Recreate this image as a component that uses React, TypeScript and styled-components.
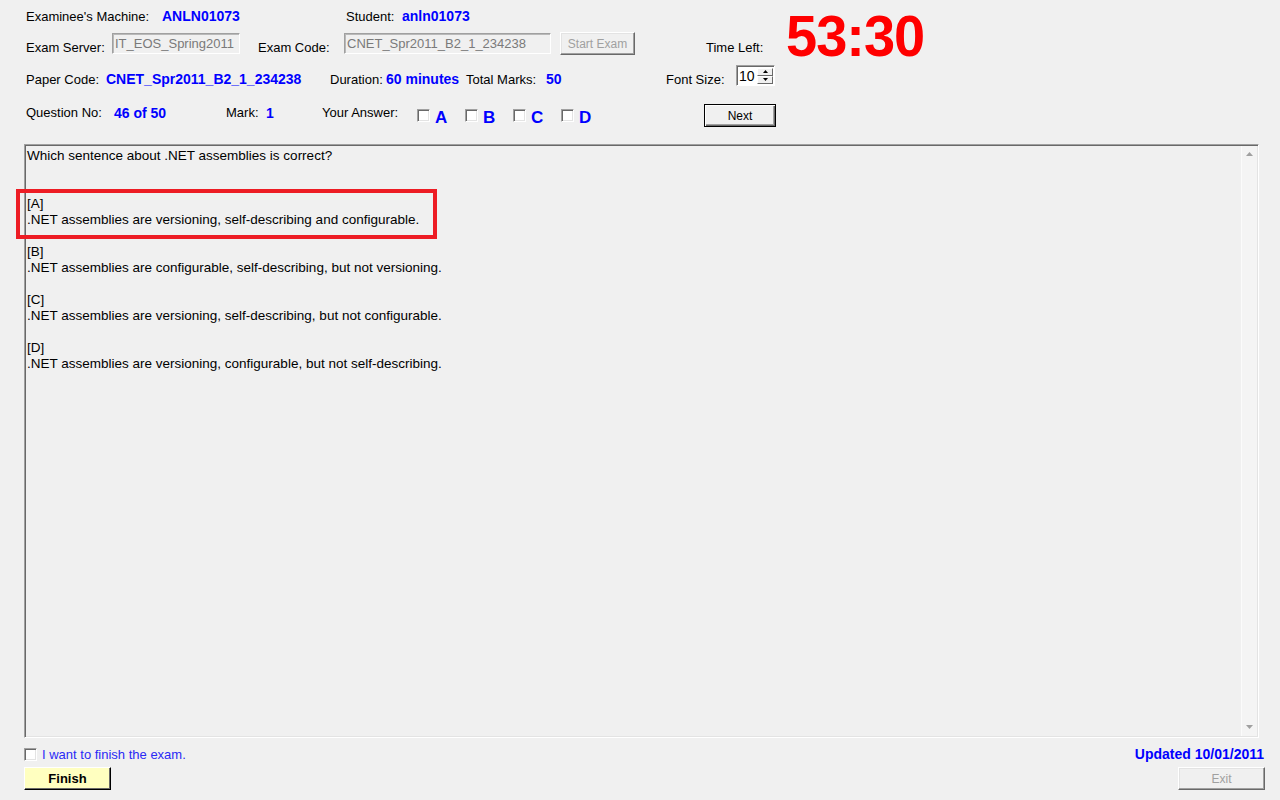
import React from "react";
import styled, { createGlobalStyle, css } from "styled-components";

const GlobalStyle = createGlobalStyle`
  html, body { margin: 0; padding: 0; background: #f0f0f0; }
  body { font-family: "Liberation Sans", Arial, sans-serif; color: #000; }
  *, *::before, *::after { box-sizing: border-box; }
`;

const Window = styled.div`
  width: 1280px;
  height: 800px;
  display: flex;
  flex-direction: column;
  background: #f0f0f0;
  overflow: hidden;
`;

const Header = styled.div`
  display: flex;
  padding-left: 26px;
`;

const LeftBlock = styled.div`
  width: 750px;
  padding-top: 6px;
  display: flex;
  flex-direction: column;
`;

const Row = styled.div<{ $h: number; $mt: number; $align?: string }>`
  display: flex;
  height: ${(p) => p.$h}px;
  margin-top: ${(p) => p.$mt}px;
  align-items: ${(p) => p.$align ?? "center"};
`;

const Cell = styled.div<{ $w?: number; $lift?: number }>`
  flex: 0 0 auto;
  width: ${(p) => (p.$w ? `${p.$w}px` : "auto")};
  display: flex;
  align-items: center;
  margin-bottom: ${(p) => p.$lift ?? 0}px;
`;

const Label = styled.span`
  font-size: 13px;
  line-height: 15px;
  white-space: nowrap;
  color: #000;
`;

const Value = styled.span`
  font-size: 14px;
  line-height: 16px;
  font-weight: bold;
  color: #0000ff;
  white-space: nowrap;
`;

const Timer = styled.div`
  margin-left: 10px;
  margin-top: 9px;
  font-size: 56px;
  line-height: 56px;
  font-weight: bold;
  color: #ff0000;
  transform: scaleY(1.01);
  transform-origin: top left;
  letter-spacing: -1px;
`;

const TextBox = styled.div<{ $w: number }>`
  width: ${(p) => p.$w}px;
  height: 21px;
  border: 1px solid;
  border-color: #a0a0a0 #ffffff #ffffff #a0a0a0;
  box-shadow: inset 1px 1px 0 #b9b9b9;
  background: #f0f0f0;
  color: #7a7a7a;
  font-size: 13px;
  line-height: 17px;
  padding: 1px 0 0 2px;
  white-space: nowrap;
  overflow: hidden;
`;

const raised = css`
  border: 1px solid;
  border-color: #ffffff #696969 #696969 #ffffff;
  box-shadow: inset -1px -1px 0 #a0a0a0, inset 1px 1px 0 #e3e3e3;
`;

const Button = styled.div<{ $w: number; $variant?: "normal" | "default" | "finish"; $disabled?: boolean }>`
  width: ${(p) => p.$w}px;
  height: 23px;
  display: flex;
  align-items: center;
  justify-content: center;
  font-size: 12px;
  color: ${(p) => (p.$disabled ? "#a0a0a0" : "#000")};
  background: #f0f0f0;
  ${raised}
  ${(p) =>
    p.$variant === "default" &&
    css`
      border: 1px solid #000;
      box-shadow: inset 1px 1px 0 #fff, inset -1px -1px 0 #696969, inset -2px -2px 0 #a0a0a0;
    `}
  ${(p) =>
    p.$variant === "finish" &&
    css`
      background: #ffffc0;
      font-weight: bold;
      font-size: 13px;
      border: 1px solid;
      border-color: #ffffff #000 #000 #ffffff;
      box-shadow: inset -1px -1px 0 #696969;
    `}
`;

const Spinner = styled.div`
  width: 39px;
  height: 21px;
  display: flex;
  border: 1px solid;
  border-color: #a0a0a0 #ffffff #ffffff #a0a0a0;
  box-shadow: inset 1px 1px 0 #696969;
  background: #fff;
  padding: 2px 1px 1px 2px;
`;

const SpinValue = styled.span`
  flex: 1;
  font-size: 14px;
  line-height: 16px;
`;

const SpinButtons = styled.div`
  width: 16px;
  display: flex;
  flex-direction: column;
`;

const SpinBtn = styled.div`
  flex: 1;
  display: flex;
  align-items: center;
  justify-content: center;
  background: #f0f0f0;
  border: 1px solid;
  border-color: #fff #696969 #696969 #fff;
`;

const CheckBox = styled.span`
  display: inline-block;
  width: 13px;
  height: 13px;
  background: #fff;
  border: 1px solid;
  border-color: #a0a0a0 #ffffff #ffffff #a0a0a0;
  box-shadow: inset 1px 1px 0 #696969, inset -1px -1px 0 #e3e3e3;
  flex: 0 0 auto;
`;

const Options = styled.div`
  display: flex;
  width: 287px;
  align-items: center;
`;

const Option = styled.div`
  width: 48px;
  display: flex;
  align-items: center;
  gap: 5px;
`;

const OptionLetter = styled.span`
  font-size: 17px;
  line-height: 18px;
  font-weight: bold;
  color: #0000ff;
  margin-top: 4px;
`;

const Panel = styled.div`
  margin: 17px 0 0 24px;
  width: 1235px;
  height: 594px;
  display: flex;
  border: 1px solid;
  border-color: #a0a0a0 #ffffff #ffffff #a0a0a0;
  box-shadow: inset 1px 1px 0 #696969, inset -1px -1px 0 #e3e3e3;
`;

const Content = styled.div`
  flex: 1;
  padding: 3px 0 0 2px;
  font-size: 13.5px;
  line-height: 16px;
  color: #000;
`;

const Line = styled.div`
  height: 16px;
  white-space: nowrap;
`;

const Block = styled.div<{ $mt: number; $highlight?: boolean }>`
  position: relative;
  margin-top: ${(p) => p.$mt}px;
  ${(p) =>
    p.$highlight &&
    css`
      &::after {
        content: "";
        position: absolute;
        left: -11px;
        top: -7px;
        width: 421px;
        height: 50px;
        border: 4px solid #ed1c24;
      }
    `}
`;

const ScrollBar = styled.div`
  width: 16px;
  margin: 1px 1px 1px 0;
  display: flex;
  flex-direction: column;
  justify-content: space-between;
  background: #f4f4f4;
  border-left: 1px solid #fbfbfb;
`;

const ScrollArrow = styled.div`
  height: 17px;
  display: flex;
  align-items: center;
  justify-content: center;
`;

const Footer = styled.div`
  display: flex;
  flex-direction: column;
  padding: 8px 15px 0 24px;
`;

const FooterRow = styled.div<{ $mt: number }>`
  display: flex;
  justify-content: space-between;
  align-items: center;
  margin-top: ${(p) => p.$mt}px;
`;

const FinishCheck = styled.div`
  display: flex;
  align-items: center;
  gap: 5px;
`;

const FinishText = styled.span`
  font-size: 13px;
  line-height: 15px;
  color: #2a2af5;
`;

const Updated = styled(Value)`
  margin-right: 1px;
`;

const Tri = ({ up, size = 7, color = "#a0a0a0" }: { up?: boolean; size?: number; color?: string }) => (
  <svg width={size} height={Math.ceil(size / 2) + 1} viewBox={`0 0 ${size} ${Math.ceil(size / 2) + 1}`}>
    {up ? (
      <polygon points={`0,${Math.ceil(size / 2)} ${size / 2},0 ${size},${Math.ceil(size / 2)}`} fill={color} />
    ) : (
      <polygon points={`0,0 ${size},0 ${size / 2},${Math.ceil(size / 2)}`} fill={color} />
    )}
  </svg>
);

export default function App() {
  return (
    <Window>
      <GlobalStyle />
      <Header>
        <LeftBlock>
          <Row $h={20} $mt={0}>
            <Cell $w={136}><Label>Examinee's Machine:</Label></Cell>
            <Cell $w={184}><Value>ANLN01073</Value></Cell>
            <Cell $w={56}><Label>Student:</Label></Cell>
            <Cell><Value>anln01073</Value></Cell>
          </Row>
          <Row $h={24} $mt={6} $align="flex-end">
            <Cell $w={86} $lift={1}><Label>Exam Server:</Label></Cell>
            <Cell $w={146} $lift={2}><TextBox $w={128}>IT_EOS_Spring2011</TextBox></Cell>
            <Cell $w={86} $lift={1}><Label>Exam Code:</Label></Cell>
            <Cell $w={216} $lift={2}><TextBox $w={207}>CNET_Spr2011_B2_1_234238</TextBox></Cell>
            <Cell $w={146} $lift={1}><Button $w={75} $disabled>Start Exam</Button></Cell>
            <Cell $lift={1}><Label>Time Left:</Label></Cell>
          </Row>
          <Row $h={23} $mt={8} $align="flex-end">
            <Cell $w={80}><Label>Paper Code:</Label></Cell>
            <Cell $w={224}><Value>CNET_Spr2011_B2_1_234238</Value></Cell>
            <Cell $w={56}><Label>Duration:</Label></Cell>
            <Cell $w={80}><Value>60 minutes</Value></Cell>
            <Cell $w={80}><Label>Total Marks:</Label></Cell>
            <Cell $w={120}><Value>50</Value></Cell>
            <Cell $w={70}><Label>Font Size:</Label></Cell>
            <Cell $lift={1}>
              <Spinner>
                <SpinValue>10</SpinValue>
                <SpinButtons>
                  <SpinBtn><Tri up size={5} color="#000" /></SpinBtn>
                  <SpinBtn><Tri size={5} color="#000" /></SpinBtn>
                </SpinButtons>
              </Spinner>
            </Cell>
          </Row>
          <Row $h={23} $mt={17}>
            <Cell $w={88} $lift={6}><Label>Question No:</Label></Cell>
            <Cell $w={112} $lift={6}><Value>46 of 50</Value></Cell>
            <Cell $w={40} $lift={6}><Label>Mark:</Label></Cell>
            <Cell $w={56} $lift={6}><Value>1</Value></Cell>
            <Cell $w={95} $lift={6}><Label>Your Answer:</Label></Cell>
            <Options>
              {["A", "B", "C", "D"].map((l) => (
                <Option key={l}>
                  <CheckBox />
                  <OptionLetter>{l}</OptionLetter>
                </Option>
              ))}
            </Options>
            <Cell><Button $w={72} $variant="default">Next</Button></Cell>
          </Row>
        </LeftBlock>
        <Timer>53:30</Timer>
      </Header>

      <Panel>
        <Content>
          <Line>Which sentence about .NET assemblies is correct?</Line>
          <Block $mt={32} $highlight>
            <Line>[A]</Line>
            <Line>.NET assemblies are versioning, self-describing and configurable.</Line>
          </Block>
          <Block $mt={16}>
            <Line>[B]</Line>
            <Line>.NET assemblies are configurable, self-describing, but not versioning.</Line>
          </Block>
          <Block $mt={16}>
            <Line>[C]</Line>
            <Line>.NET assemblies are versioning, self-describing, but not configurable.</Line>
          </Block>
          <Block $mt={16}>
            <Line>[D]</Line>
            <Line>.NET assemblies are versioning, configurable, but not self-describing.</Line>
          </Block>
        </Content>
        <ScrollBar>
          <ScrollArrow><Tri up /></ScrollArrow>
          <ScrollArrow><Tri /></ScrollArrow>
        </ScrollBar>
      </Panel>

      <Footer>
        <FooterRow $mt={0}>
          <FinishCheck>
            <CheckBox />
            <FinishText>I want to finish the exam.</FinishText>
          </FinishCheck>
          <Updated>Updated 10/01/2011</Updated>
        </FooterRow>
        <FooterRow $mt={5}>
          <Button $w={87} $variant="finish">Finish</Button>
          <Button $w={87} $disabled>Exit</Button>
        </FooterRow>
      </Footer>
    </Window>
  );
}
